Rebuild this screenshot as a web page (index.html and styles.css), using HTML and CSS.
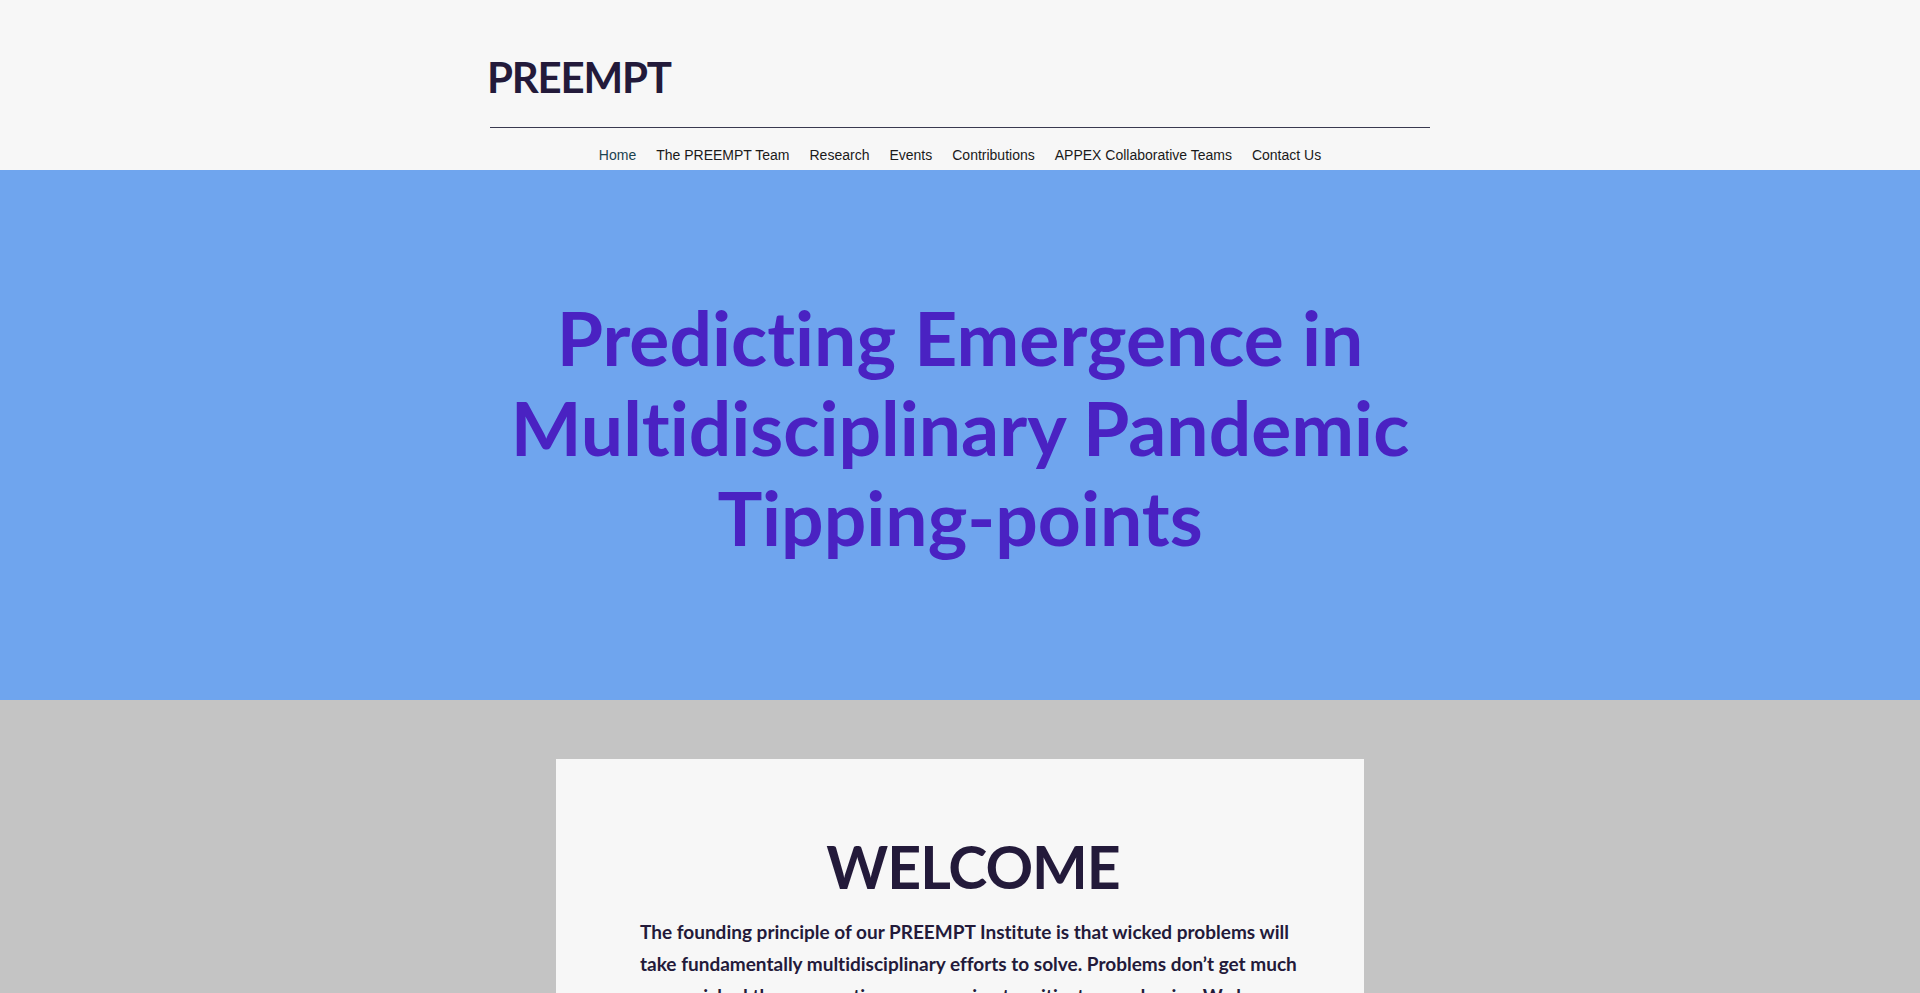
FILE: index.html
```html
<!DOCTYPE html>
<html lang="en">
<head>
<meta charset="utf-8">
<title>PREEMPT</title>
<link rel="stylesheet" href="styles.css">
</head>
<body>
<header class="site-header">
  <div class="header-inner">
    <div class="logo">PREEMPT</div>
    <div class="rule"></div>
    <nav class="nav">
      <a class="nav-item active" href="#">Home</a>
      <a class="nav-item" href="#">The PREEMPT Team</a>
      <a class="nav-item" href="#">Research</a>
      <a class="nav-item" href="#">Events</a>
      <a class="nav-item" href="#">Contributions</a>
      <a class="nav-item" href="#">APPEX Collaborative Teams</a>
      <a class="nav-item" href="#">Contact Us</a>
    </nav>
  </div>
</header>
<section class="hero">
  <h1 class="hero-title">Predicting Emergence in<br>Multidisciplinary Pandemic<br>Tipping-points</h1>
</section>
<section class="welcome-band">
  <div class="card">
    <div class="card-text">
      <h2 class="welcome-title">WELCOME</h2>
      <p class="welcome-body">The founding principle of our PREEMPT Institute is that wicked problems will take fundamentally multidisciplinary efforts to solve. Problems don’t get much more wicked than preventing, or preparing to mitigate, pandemics. We have assembled a team of researchers from across the disciplines to work together.</p>
    </div>
  </div>
</section>
</body>
</html>
```

FILE: styles.css
```css
html, body {
  margin: 0;
  padding: 0;
}
body {
  background: #c4c4c4;
  font-family: "Lato", "Noto Sans", sans-serif;
  font-variant-ligatures: none;
  overflow: hidden;
}
.site-header {
  background: #f7f7f7;
  height: 170px;
}
.header-inner {
  width: 940px;
  margin: 0 auto;
  display: flex;
  flex-direction: column;
}
.logo {
  margin-top: 51px;
  margin-left: -3px;
  font-family: "Lato", sans-serif;
  font-weight: 700;
  font-size: 42px;
  letter-spacing: -1.2px;
  line-height: 52px;
  color: #231a3a;
}
.rule {
  margin-top: 24px;
  height: 1px;
  background: #3a3a50;
}
.nav {
  display: flex;
  justify-content: center;
  margin-top: 18px;
}
.nav-item {
  font-family: "Liberation Sans", Arial, sans-serif;
  font-size: 14px;
  line-height: 18px;
  color: #1a1a1a;
  text-decoration: none;
  padding: 0 10px;
}
.nav-item.active {
  color: #1b4350;
}
.hero {
  background: #6fa5ee;
  height: 530px;
  display: flex;
  justify-content: center;
}
.hero-title {
  margin: 0;
  margin-top: 122px;
  text-align: center;
  font-family: "Lato", sans-serif;
  font-weight: 700;
  font-size: 75px;
  line-height: 90px;
  color: #4a22c2;
}
.welcome-band {
  padding-top: 59px;
}
.card {
  width: 808px;
  margin: 0 auto;
  background: #f7f7f7;
  min-height: 400px;
  box-sizing: border-box;
  padding: 76px 58px 0 84px;
}
.card-text {
  width: 666px;
}
.welcome-title {
  margin: 0;
  text-align: center;
  font-family: "Lato", sans-serif;
  font-weight: 700;
  font-size: 59px;
  letter-spacing: -1px;
  line-height: 64px;
  color: #231a3a;
}
.welcome-body {
  margin: 17px 0 0;
  font-family: "Lato", sans-serif;
  font-weight: 700;
  font-size: 19px;
  line-height: 32px;
  color: #231a3a;
}
```
